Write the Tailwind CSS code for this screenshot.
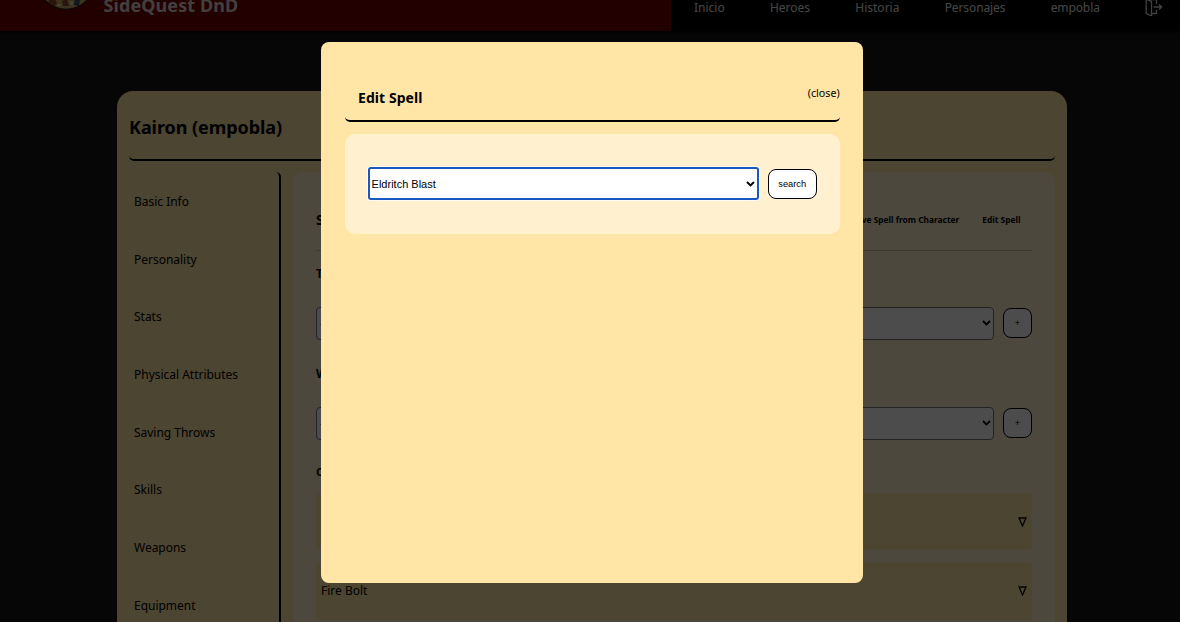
<!DOCTYPE html>
<html lang="es">
<head>
<meta charset="utf-8">
<title>SideQuest DnD</title>
<script src="https://cdn.jsdelivr.net/npm/@tailwindcss/browser@4"></script>
</head>
<body class="h-[622px] overflow-hidden bg-[#151515] font-['Noto_Sans',sans-serif] text-black">
<div class="h-[622px] overflow-hidden">
  <header class="-mt-[70px] flex h-[101px] bg-[#730000] shadow-[0_1px_3px_#000]">
    <div class="flex w-[671px] pl-[37px] pt-[22px]">
      <svg class="size-[58px]" viewBox="0 0 58 58">
        <clipPath id="c"><circle cx="29" cy="29" r="28"/></clipPath>
        <g clip-path="url(#c)">
          <rect width="58" height="58" fill="#5e8a90"/>
          <path d="M0 46l14-3 12 4 12-3 20 1v13H0z" fill="#c9a866"/>
          <path d="M13 46h5l2 6-3 3-6-3zM25 49l5-2 2 7h-6z" fill="#8c4a28"/>
          <path d="M38 46l5 1-1 7-5-1z" fill="#33515e"/>
          <path d="M20 52h4v2h-4zM33 49h3v4h-3z" fill="#ead9a0"/>
        </g>
        <circle cx="29" cy="29" r="28.3" fill="none" stroke="#1b1b1b"/>
      </svg>
      <h1 class="ml-[8.500px] mt-[40px] text-[18px] leading-[26px] font-bold tracking-[0.08px] whitespace-nowrap text-[#dcd2d2]">SideQuest DnD</h1>
    </div>
    <nav class="flex flex-1 items-start justify-between bg-black pl-[23px] pr-[17px] pt-[68px] text-[12px] leading-5 text-[#e6e6e6]">
      <a>Inicio</a><a>Heroes</a><a>Historia</a><a class="tracking-[-0.1px]">Personajes</a><a class="tracking-[-0.1px]">empobla</a>
      <svg class="size-[18px]" viewBox="0 0 18 18" fill="none" stroke="#d8d8d8" stroke-width="1.300"><path d="M1.200 1.500L6.500 3.500V17.800L1.200 15.500zM1.200 1.500H11.500V6M11.500 12V15.500H6.500M8.500 9H16.500M14 6.500L16.700 9L14 11.500"/></svg>
    </nav>
  </header>
  <main class="ml-[117px] mt-[60.400px] w-[950px] rounded-t-2xl bg-[#ffe6a7] px-3">
    <div class="h-[69.600px] rounded-[5px] border-b-2 border-black pt-[21.600px]">
      <h2 class="text-[18px] leading-7 font-bold tracking-[-0.06px]"><span>Kairon (empobla)</span></h2>
    </div>
    <div class="mt-[11px] flex h-[600px] gap-3">
      <ul class="w-[152px] rounded-[5px] border-r-2 border-black pl-[5px] pt-[0.900px] text-[12px] leading-[57.7px] tracking-[-0.02px] whitespace-nowrap">
        <li>Basic Info</li><li>Personality</li><li>Stats</li><li>Physical Attributes</li><li>Saving Throws</li><li>Skills</li><li>Weapons</li><li>Equipment</li>
      </ul>
      <section class="flex-1 rounded-[10px] bg-[#fff1d0] px-[23px] pt-[18px]">
        <div class="flex h-[61px] items-center border-b border-[#c9bfa8] font-bold">
          <h3 class="flex-1 text-[14px]">Spells</h3>
          <a class="mr-[23px] text-[8.400px]">Remove Spell from Character</a>
          <a class="mr-[11.500px] text-[8.400px]">Edit Spell</a>
        </div>
        <h4 class="mt-[13px] text-[12px] leading-5 font-bold">Transmutation</h4>
        <div class="mt-[23px] flex items-center gap-[9px]">
          <div class="flex h-[33px] flex-1 items-center justify-between rounded border border-[#767676] bg-white pl-[3px] pr-[2px] font-['Liberation_Sans',sans-serif] text-[11px]"><span>--</span><svg class="h-[6px] w-[9px]" viewBox="0 0 9 6" fill="none" stroke="#000" stroke-width="1.900"><path d="M1 1L4.500 4.500L8 1"/></svg></div>
          <button class="h-[30px] w-[29px] rounded-lg border border-black bg-white pt-px font-['Liberation_Sans',sans-serif] text-[9px]">+</button>
        </div>
        <h4 class="mt-[24px] text-[12px] leading-5 font-bold">Wizard Spells</h4>
        <div class="mt-[23px] flex items-center gap-[9px]">
          <div class="flex h-[33px] flex-1 items-center justify-between rounded border border-[#767676] bg-white pl-[3px] pr-[2px] font-['Liberation_Sans',sans-serif] text-[11px]"><span>--</span><svg class="h-[6px] w-[9px]" viewBox="0 0 9 6" fill="none" stroke="#000" stroke-width="1.900"><path d="M1 1L4.500 4.500L8 1"/></svg></div>
          <button class="h-[30px] w-[29px] rounded-lg border border-black bg-white pt-px font-['Liberation_Sans',sans-serif] text-[9px]">+</button>
        </div>
        <h4 class="mt-[22px] text-[11px] leading-5 font-bold">Cantrips</h4>
        <div class="mt-[11.500px] flex h-[57px] items-center justify-between rounded-[3px] bg-[#ffe6a7] px-[5px] text-[12px]"><span>Eldritch Blast</span><svg class="h-[10px] w-[9px]" viewBox="0 0 9 10" fill="none" stroke="#000" stroke-width="1.300"><path d="M1 1H8L4.500 9z"/></svg></div>
        <div class="mt-[12px] flex h-[58px] items-center justify-between rounded-[3px] bg-[#ffe6a7] px-[5px] text-[12px]"><span>Fire Bolt</span><svg class="h-[10px] w-[9px]" viewBox="0 0 9 10" fill="none" stroke="#000" stroke-width="1.300"><path d="M1 1H8L4.500 9z"/></svg></div>
      </section>
    </div>
  </main>
</div>
<div class="fixed inset-0 bg-black/70 pl-[321.400px] pt-[41.700px]">
  <div class="h-[541px] w-[541.300px] rounded-lg bg-[#ffe6a7] pl-[23.200px] pr-[23px] pt-[35px]">
    <div class="flex h-[45px] items-start justify-between rounded-[5px] border-b-[2.500px] border-black pl-[13.500px]">
      <h3 class="mt-[11.500px] text-[14px] leading-5 font-bold tracking-[0.05px]">Edit Spell</h3>
      <a class="mt-[6.500px] text-[10.700px] leading-5">(close)</a>
    </div>
    <div class="mt-3 flex h-[100px] items-center gap-[9px] rounded-[10px] bg-[#fff1d0] px-[23px] font-['Liberation_Sans',sans-serif]">
      <div class="flex h-[33px] flex-1 items-center justify-between rounded-[3px] border-2 border-[#1858c0] bg-white px-[2px] text-[11px] shadow-[0_0_0_1px_#ffffffb0]"><span class="pt-px">Eldritch Blast</span><svg class="h-[6px] w-[9px]" viewBox="0 0 9 6" fill="none" stroke="#000" stroke-width="1.900"><path d="M1 1L4.500 4.500L8 1"/></svg></div>
      <button class="h-[30px] w-[49px] rounded-lg border border-black bg-white pt-[2px] text-[9.300px]">search</button>
    </div>
  </div>
</div>
</body>
</html>
